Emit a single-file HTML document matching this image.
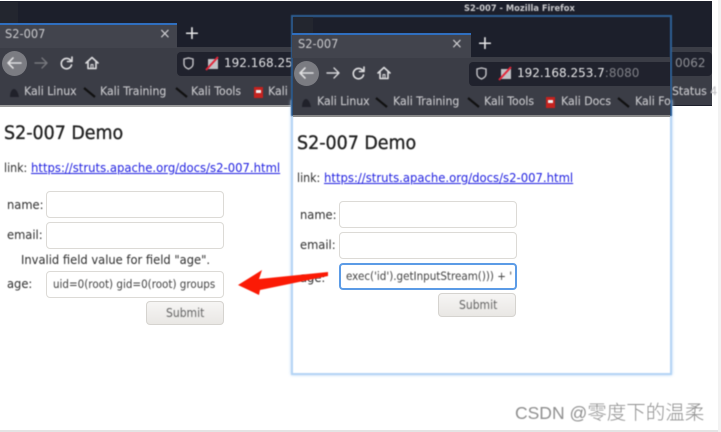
<!DOCTYPE html>
<html><head><meta charset="utf-8"><style>
html,body{margin:0;padding:0;background:#fff}
#r{position:relative;width:721px;height:432px;overflow:hidden;background:#fff;font-family:"DejaVu Sans","Liberation Sans",sans-serif}
.a{position:absolute;box-sizing:border-box}
.t{position:absolute;white-space:nowrap;filter:blur(.55px);line-height:1;transform-origin:0 0}
.in{position:absolute;box-sizing:border-box;background:#fff;border:1px solid #dcdad6;border-radius:4px;width:178px;height:27px;filter:blur(.3px)}
.btn{position:absolute;box-sizing:border-box;width:78px;height:24px;border:1px solid #d5d3cf;border-radius:4px;background:linear-gradient(#f6f5f4,#e9e7e4);filter:blur(.3px)}
.bm{color:#c4c4c8;font-size:11.5px;transform:scaleX(.95);-webkit-text-stroke:.15px #c4c4c8}
.lb{color:#2e2e2e;font-size:12.5px;transform:scaleX(.92)}
.h{color:#222;font-size:18.3px;-webkit-text-stroke:.35px #222;transform:scaleX(.955)}
.lk{color:#1f1fe0;font-size:12px;text-decoration:underline;transform:scaleX(.97)}
.v{color:#444;font-size:11.5px;transform:scaleX(.9)}
.s{color:#666;font-size:12px;transform:scaleX(.9)}
svg{position:absolute;overflow:visible;filter:blur(.4px)}
</style></head><body><div id="r">
<!-- back window -->
<div class="a" style="left:0;top:1px;width:712px;height:105px;background:#1c1f2b"></div>
<div class="a" style="left:0;top:2px;width:18px;height:21px;background:#23262f"></div>
<div class="a" style="left:0;top:105px;width:291px;height:2px;background:#9a9a9a"></div>
<div class="a" style="left:0;top:47px;width:712px;height:33px;background:#3b3d46"></div>
<div class="a" style="left:0;top:79px;width:712px;height:26px;background:#3b3d46"></div>
<div class="a" style="left:0;top:23px;width:177px;height:25px;background:#42444d;border-top:2px solid #2f6fc0"></div>
<div class="a" style="left:177px;top:52px;width:535px;height:24px;background:#20222d;border-radius:4px"></div>
<div class="t" style="left:5px;top:28px;color:#c9c9cc;font-size:12px;transform:scaleX(.95)">S2-007</div>
<div class="t" style="left:159px;top:27px;color:#cfcfd2;font-size:14px">×</div>
<div class="t" style="left:184px;top:24px;color:#e6e6e8;font-size:19px">+</div>
<div class="a" style="left:2px;top:51px;width:25px;height:25px;border-radius:50%;background:#7b7c82"></div>
<svg style="left:0;top:47px" width="110" height="32" fill="none" stroke-linecap="round" stroke-linejoin="round">
<path d="M8 16H21M13 11L8 16L13 21" stroke="#dedee0" stroke-width="1.6"/>
<path d="M35 16H47M42 11L47 16L42 21" stroke="#77787e" stroke-width="1.4"/>
<path d="M71 14A5.2 5.2 0 1 0 71.5 18M72 10V14.5H67.5" stroke="#dedee0" stroke-width="1.6"/>
<path d="M86 16L92 10.5L98 16M88 15V21.5H96V15" stroke="#dedee0" stroke-width="1.6"/><path d="M91 21V17.5H93V21" stroke="#dedee0"/></svg>
<svg style="left:180px;top:55px" width="50" height="20" fill="none">
<path d="M4 4L8.5 3L13 4V9C13 11.500 11 13 8.500 14C6 13 4 11.500 4 9Z" stroke="#c6c6ca" stroke-width="1.4"/>
<path d="M28 4H38V14H28Z" fill="#c2c2c6"/><path d="M26 15L38 2" stroke="#e3263a" stroke-width="2"/></svg>
<div class="t" style="left:224px;top:57px;color:#e0e0e3;font-size:12px">192.168.253</div>
<div class="t" style="left:675px;top:57px;color:#8d8e94;font-size:12px">0062</div>
<div class="t bm" style="left:24px;top:86px">Kali Linux</div>
<div class="t bm" style="left:100px;top:86px">Kali Training</div>
<div class="t bm" style="left:191px;top:86px">Kali Tools</div>
<div class="t bm" style="left:268px;top:86px">Kali</div>
<div class="t bm" style="left:672px;top:86px">Status 4</div>
<svg style="left:0;top:84px" width="291" height="16" fill="none">
<path d="M10 13C10 8 12 5 14 5C16 5 18 8 19 13Z" fill="#20212a"/>
<path d="M84 4L95 13" stroke="#111" stroke-width="2.2"/>
<path d="M176 4L187 13" stroke="#111" stroke-width="2.2"/>
<rect x="254" y="3" width="9" height="11" fill="#c5231f"/><rect x="256" y="6" width="5" height="3" fill="#eee"/></svg>
<!-- left content -->
<div class="t h" style="left:4px;top:125px">S2-007 Demo</div>
<div class="t lb" style="left:4px;top:162px;font-size:12px">link:</div>
<div class="t lk" style="left:31px;top:162px">https://struts.apache.org/docs/s2-007.html</div>
<div class="t lb" style="left:7px;top:199px">name:</div>
<div class="in" style="left:46px;top:191px"></div>
<div class="t lb" style="left:7px;top:229px">email:</div>
<div class="in" style="left:46px;top:222px"></div>
<div class="t lb" style="left:21px;top:254px">Invalid field value for field "age".</div>
<div class="t lb" style="left:7px;top:278px">age:</div>
<div class="in" style="left:46px;top:271px"></div>
<div class="t v" style="left:53px;top:279px">uid=0(root) gid=0(root) groups</div>
<div class="btn" style="left:146px;top:301px"></div>
<div class="t s" style="left:166px;top:307px">Submit</div>
<!-- front window -->
<div class="a" style="left:291px;top:100px;width:381px;height:275px;background:#fff;border:2px solid #b4d4f5;box-shadow:0 0 3px #b4d4f5;filter:blur(.6px)"></div>
<div class="a" style="left:291px;top:15px;width:381px;height:101px;background:#1c1f2b;border:2px solid #2d5f95;border-bottom:0;filter:blur(.4px)"></div>
<div class="a" style="left:293px;top:17px;width:20px;height:16px;background:#23262f"></div>
<div class="a" style="left:293px;top:57px;width:377px;height:58px;background:#3b3d46"></div>
<div class="a" style="left:292px;top:33px;width:179px;height:25px;background:#42444d;border-top:2px solid #2f6fc0"></div>
<div class="a" style="left:469px;top:62px;width:201px;height:24px;background:#20222d;border-radius:4px 0 0 4px"></div>
<div class="a" style="left:293px;top:115px;width:377px;height:2px;background:#888"></div>
<div class="t" style="left:464px;top:5px;color:#c9c9cc;font-size:8.5px;font-weight:700;transform:scaleX(.98)">S2-007 - Mozilla Firefox</div>
<div class="t" style="left:298px;top:38px;color:#c9c9cc;font-size:12px;transform:scaleX(.95)">S2-007</div>
<div class="t" style="left:451px;top:37px;color:#cfcfd2;font-size:14px">×</div>
<div class="t" style="left:477px;top:34px;color:#e6e6e8;font-size:19px">+</div>
<div class="a" style="left:294px;top:61px;width:25px;height:25px;border-radius:50%;background:#7b7c82"></div>
<svg style="left:292px;top:57px" width="110" height="32" fill="none" stroke-linecap="round" stroke-linejoin="round">
<path d="M8 16H21M13 11L8 16L13 21" stroke="#dedee0" stroke-width="1.6"/>
<path d="M35 16H47M42 11L47 16L42 21" stroke="#d6d6d9" stroke-width="1.4"/>
<path d="M71 14A5.2 5.2 0 1 0 71.5 18M72 10V14.5H67.5" stroke="#dedee0" stroke-width="1.6"/>
<path d="M86 16L92 10.5L98 16M88 15V21.5H96V15" stroke="#dedee0" stroke-width="1.6"/><path d="M91 21V17.5H93V21" stroke="#dedee0"/></svg>
<svg style="left:473px;top:65px" width="50" height="20" fill="none">
<path d="M4 4L8.5 3L13 4V9C13 11.500 11 13 8.500 14C6 13 4 11.500 4 9Z" stroke="#c6c6ca" stroke-width="1.4"/>
<path d="M28 4H38V14H28Z" fill="#c2c2c6"/><path d="M26 15L38 2" stroke="#e3263a" stroke-width="2"/></svg>
<div class="t" style="left:517px;top:67px;color:#e6e6e8;font-size:12px">192.168.253.7<span style="color:#7f8087">:8080</span></div>
<div class="t bm" style="left:317px;top:96px">Kali Linux</div>
<div class="t bm" style="left:393px;top:96px">Kali Training</div>
<div class="t bm" style="left:484px;top:96px">Kali Tools</div>
<div class="t bm" style="left:561px;top:96px">Kali Docs</div>
<div class="t bm" style="left:635px;top:96px">Kali Fo</div>
<svg style="left:292px;top:94px" width="378" height="16" fill="none">
<path d="M10 13C10 8 12 5 14 5C16 5 18 8 19 13Z" fill="#20212a"/>
<path d="M84 4L95 13" stroke="#111" stroke-width="2.2"/>
<path d="M176 4L187 13" stroke="#111" stroke-width="2.2"/>
<rect x="254" y="3" width="9" height="11" fill="#c5231f"/><rect x="256" y="6" width="5" height="3" fill="#eee"/>
<path d="M326 4L337 13" stroke="#111" stroke-width="2.2"/></svg>
<!-- right content -->
<div class="t h" style="left:297px;top:135px">S2-007 Demo</div>
<div class="t lb" style="left:297px;top:172px;font-size:12px">link:</div>
<div class="t lk" style="left:324px;top:172px">https://struts.apache.org/docs/s2-007.html</div>
<div class="t lb" style="left:300px;top:209px">name:</div>
<div class="in" style="left:339px;top:201px"></div>
<div class="t lb" style="left:300px;top:239px">email:</div>
<div class="in" style="left:339px;top:232px"></div>
<div class="t lb" style="left:300px;top:272px">age:</div>
<div class="in" style="left:339px;top:263px;border:2px solid #5b9be6"></div>
<div class="t v" style="left:346px;top:271px">exec('id').getInputStream())) + '</div>
<div class="btn" style="left:438px;top:293px"></div>
<div class="t s" style="left:459px;top:299px">Submit</div>
<!-- arrow -->
<svg style="left:0;top:0" width="721" height="432"><path d="M238 285L262 270L259 279L328 272V276L260 290L259 295Z" fill="#fb1a05"/></svg>
<!-- watermark -->
<div class="t" style="left:515px;top:404px;color:#8f8f8f;font-size:17.5px;font-family:'Liberation Sans','Noto Sans CJK SC',sans-serif;filter:blur(.4px)">CSDN @<span style="font-size:19.5px;font-weight:300">零度下的温柔</span></div>
<div class="a" style="left:0;top:430px;width:721px;height:2px;background:#e4e4e4"></div>
<div class="a" style="left:718px;top:0;width:3px;height:432px;background:#f2f2f2"></div>
</div></body></html>
